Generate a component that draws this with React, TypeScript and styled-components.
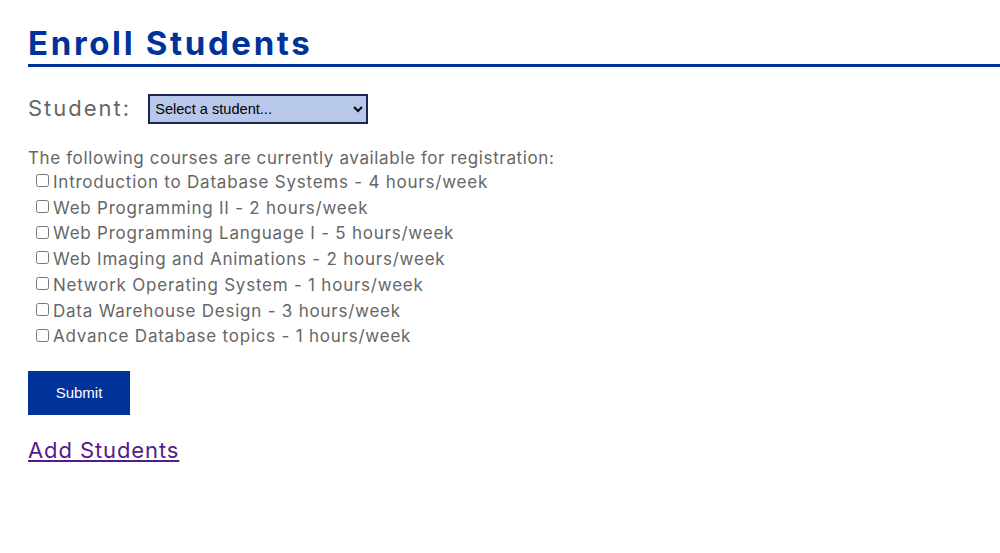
import React from "react";
import styled, { createGlobalStyle } from "styled-components";

const Global = createGlobalStyle`
  html, body { margin: 0; padding: 0; background: #fff; }
  body { font-family: "Inter", "Open Sans", sans-serif; color: #666; }
`;

const Page = styled.div`
  padding: 22px 0 0 28px;
`;

const Title = styled.h1`
  margin: 0;
  font-size: 33px;
  font-weight: 700;
  color: #003399;
  line-height: 42px;
  border-bottom: 3px solid #003399;
  letter-spacing: 2.65px;
`;

const StudentRow = styled.div`
  display: flex;
  align-items: center;
  gap: 17px;
  margin-top: 27px;
`;

const Label = styled.label`
  font-size: 22px;
  color: #666;
  letter-spacing: 2px;
  margin-top: -2px;
`;

const Select = styled.select`
  box-sizing: border-box;
  width: 220px;
  height: 30px;
  background: #b8c8ea;
  border: 2px solid #1a2550;
  font-family: "Liberation Sans", Arial, sans-serif;
  font-size: 14.6px;
  color: #000;
  padding: 0 0 0 1px;
`;

const Intro = styled.p`
  margin: 22px 0 0;
  font-size: 17px;
  line-height: 24px;
  letter-spacing: 0.62px;
`;

const CourseList = styled.div`
  display: flex;
  flex-direction: column;
  padding-left: 7px;
`;

const CourseRow = styled.label`
  display: flex;
  align-items: center;
  font-size: 17px;
  line-height: 25.7px;
  gap: 4px;
  letter-spacing: 0.77px;
`;

const Box = styled.input`
  margin: 0 0 4px 1px;
  width: 13px;
  height: 13px;
`;

const Submit = styled.button`
  margin-top: 21px;
  width: 102px;
  height: 44px;
  background: #003399;
  color: #fff;
  border: none;
  font-family: "Liberation Sans", Arial, sans-serif;
  font-size: 15px;
`;

const LinkRow = styled.div`
  margin-top: 22px;
`;

const AddLink = styled.a`
  font-size: 22px;
  color: #551a8b;
  text-decoration: underline;
  letter-spacing: 0.9px;
`;

const courses = [
  "Introduction to Database Systems - 4 hours/week",
  "Web Programming II - 2 hours/week",
  "Web Programming Language I - 5 hours/week",
  "Web Imaging and Animations - 2 hours/week",
  "Network Operating System - 1 hours/week",
  "Data Warehouse Design - 3 hours/week",
  "Advance Database topics - 1 hours/week",
];

export default function App() {
  return (
    <>
      <Global />
      <Page>
        <Title>Enroll Students</Title>
        <StudentRow>
          <Label>Student:</Label>
          <Select defaultValue="">
            <option value="">Select a student...</option>
          </Select>
        </StudentRow>
        <Intro>The following courses are currently available for registration:</Intro>
        <CourseList>
          {courses.map((c) => (
            <CourseRow key={c}>
              <Box type="checkbox" />
              {c}
            </CourseRow>
          ))}
        </CourseList>
        <Submit>Submit</Submit>
        <LinkRow>
          <AddLink href="#">Add Students</AddLink>
        </LinkRow>
      </Page>
    </>
  );
}
